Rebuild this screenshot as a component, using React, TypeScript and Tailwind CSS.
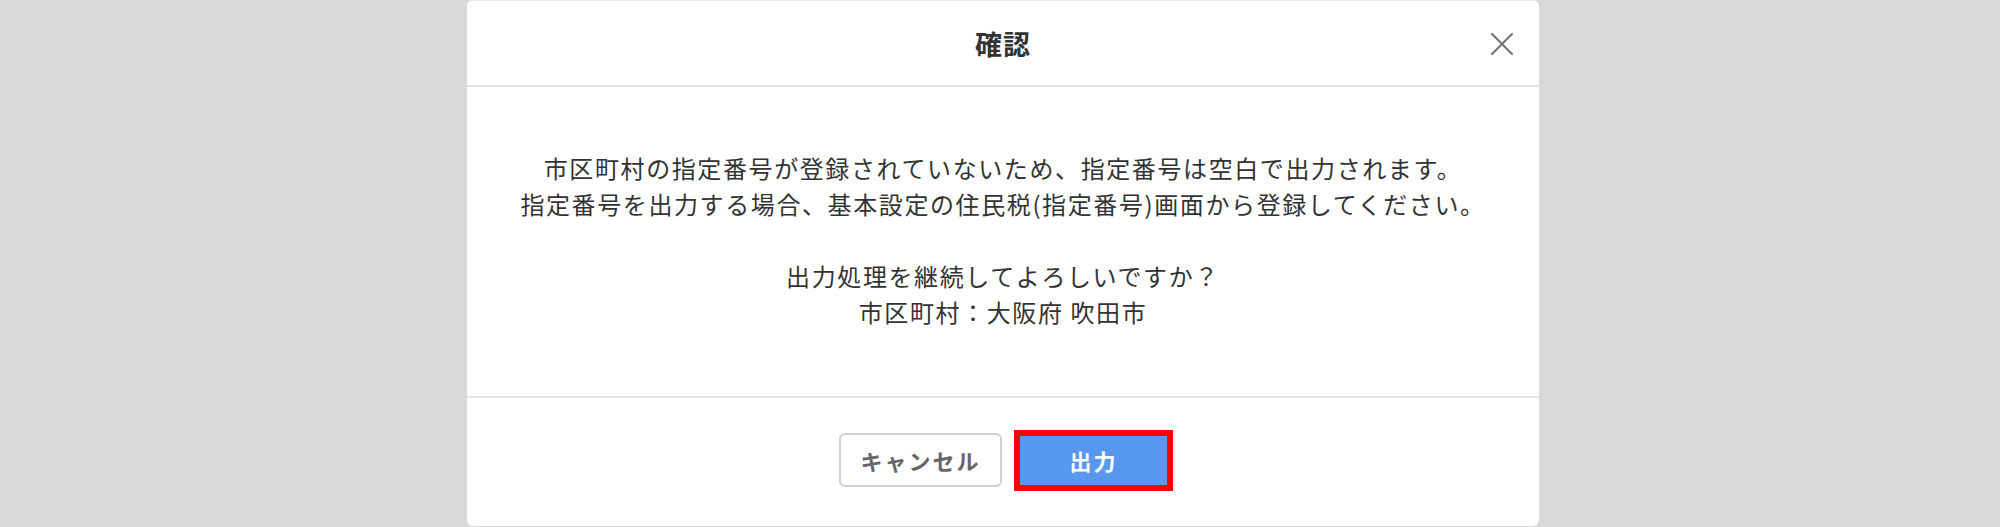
import React from "react";

export default function App() {
  const font = { fontFamily: '"Noto Sans CJK JP", "Noto Sans", sans-serif' };
  return (
    <div className="w-[2000px] h-[527px] bg-[#d9d9d9] flex justify-center pl-[6px] overflow-hidden" style={font}>
      <div className="w-[1072px] h-[526px] bg-white rounded-[6px] border-t border-[#ececec] flex flex-col">
        <div className="relative h-[86px] flex items-center justify-center border-b-2 border-[#e3e3e3] shrink-0">
          <span className="text-[27px] font-bold text-[#333] tracking-[1px] leading-none">確認</span>
          <svg className="absolute right-[25px] top-[31px] w-[24px] h-[24px]" viewBox="0 0 24 24" fill="none" stroke="#777" strokeWidth="2.2" strokeLinecap="round">
            <path d="M2 2 L22 22 M22 2 L2 22" />
          </svg>
        </div>
        <div className="h-[309px] flex flex-col items-center justify-center text-[#333] text-[24px] leading-[36px] tracking-[1.6px] shrink-0 pb-[4px]">
          <p>市区町村の指定番号が登録されていないため、指定番号は空白で出力されます。</p>
          <p>指定番号を出力する場合、基本設定の住民税(指定番号)画面から登録してください。</p>
          <p>&nbsp;</p>
          <p>出力処理を継続してよろしいですか？</p>
          <p>市区町村：大阪府 吹田市</p>
        </div>
        <div className="flex-1 border-t-2 border-[#e3e3e3] flex items-center justify-center gap-[12px] pl-[6px] pb-[4px]">
          <button className="w-[163px] h-[54px] rounded-[6px] border-2 border-[#d0d0d0] bg-white text-[#666] font-bold text-[22px] tracking-[2px]">
            キャンセル
          </button>
          <div className="w-[159px] h-[61px] border-[6px] border-[#ff0000] bg-[#5897ee] flex items-center justify-center">
            <span className="text-white font-bold text-[22px] tracking-[2px]">出力</span>
          </div>
        </div>
      </div>
    </div>
  );
}
